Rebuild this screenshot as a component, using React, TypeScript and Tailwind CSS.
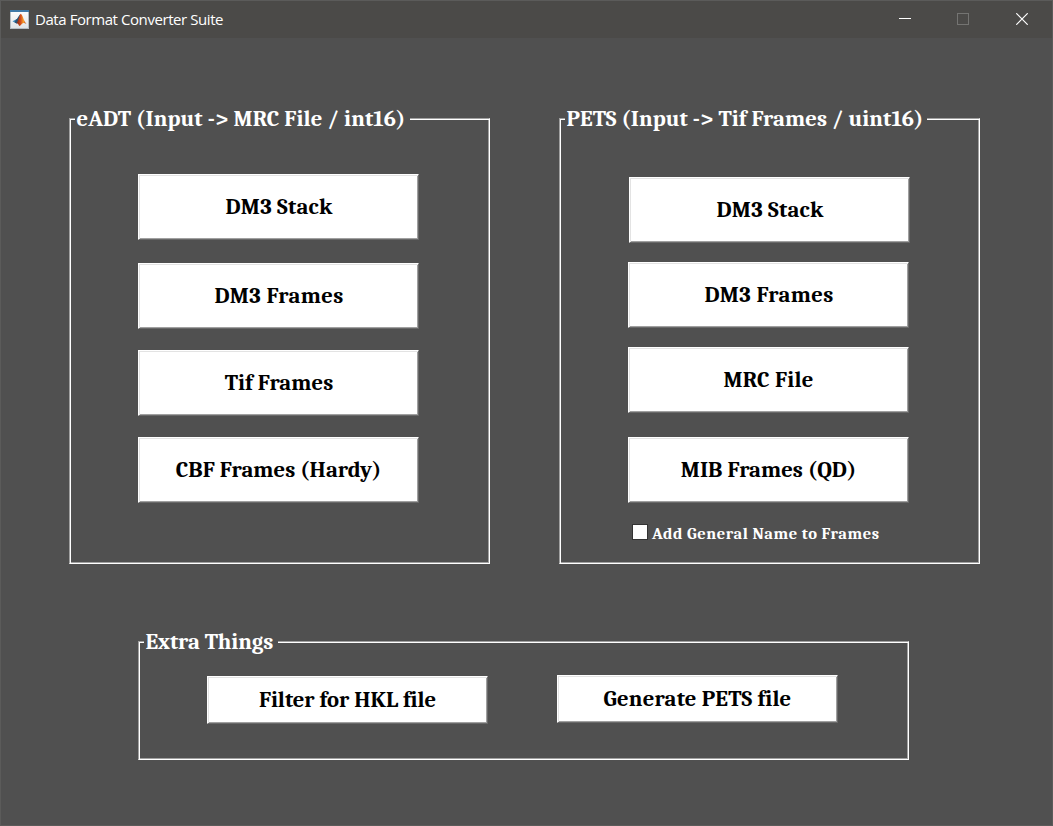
import type { ReactNode } from "react";

function MatlabIcon() {
  return (
    <svg width="19" height="19" viewBox="0 0 19 19" className="shrink-0">
      <defs>
        <linearGradient id="paper" x1="0" y1="0" x2="0" y2="1">
          <stop offset="0" stopColor="#ffffff" />
          <stop offset="1" stopColor="#dfe3e6" />
        </linearGradient>
        <linearGradient id="flame" x1="0" y1="0" x2="1" y2="0">
          <stop offset="0" stopColor="#7a1f12" />
          <stop offset="0.45" stopColor="#d9541e" />
          <stop offset="0.7" stopColor="#f6a02c" />
          <stop offset="1" stopColor="#b5301a" />
        </linearGradient>
      </defs>
      <rect x="0.5" y="0.5" width="18" height="18" fill="url(#paper)" stroke="#b4bcc2" />
      <rect x="0" y="0" width="19" height="2" fill="#3f79a8" />
      <path d="M2.5 11.3 L6 9.6 C7.6 9.2 8.4 6.4 10.2 4.2 L9.4 9.5 L6.6 13.4 Z" fill="#3f86b8" />
      <path d="M6 9.6 C7.6 9.2 8.4 6.4 10.2 4.2 L8.6 10 L6.6 13.4 L4.6 12.4 Z" fill="#285577" />
      <path d="M6.4 13.2 C8 12 8.6 7 10.6 3.8 C12.6 4.4 13.4 10.6 16.4 14 C14.4 12.6 13 12.6 11.8 14 C10.8 15.2 10 16 9.2 16 C8.6 14.4 8 13.4 6.4 13.2 Z" fill="url(#flame)" />
    </svg>
  );
}

function TitleBar() {
  return (
    <header className="flex h-[37px] shrink-0 items-center bg-[#4b4a48] pl-[9px]">
      <MatlabIcon />
      <h1 className="mb-[2px] ml-[6px] font-['Open_Sans','Noto_Sans',sans-serif] text-[15px] leading-5 tracking-[-0.43px] text-white">
        Data Format Converter Suite
      </h1>
      <div className="ml-auto flex h-full items-center pb-px pr-px">
        <button aria-label="Minimize" className="flex h-full w-[58px] items-center justify-center">
          <svg width="12" height="12" viewBox="0 0 12 12">
            <path d="M0 5.5H12" stroke="#ffffff" />
          </svg>
        </button>
        <button aria-label="Maximize" disabled className="flex h-full w-[58px] items-center justify-center">
          <svg width="12" height="12" viewBox="0 0 12 12">
            <rect x="0.5" y="0.5" width="11" height="11" fill="none" stroke="#747472" />
          </svg>
        </button>
        <button aria-label="Close" className="flex h-full w-[59px] items-center justify-center">
          <svg width="12" height="12" viewBox="0 0 12 12">
            <path d="M0.3 0.3L11.7 11.7M11.7 0.3L0.3 11.7" stroke="#ffffff" strokeWidth="1.2" />
          </svg>
        </button>
      </div>
    </header>
  );
}

function Group({ title, titleClass, className, children }: { title: string; titleClass: string; className: string; children: ReactNode }) {
  return (
    <section
      className={`flex flex-col border border-b-white border-l-[#a0a0a0] border-r-white border-t-[#a0a0a0] shadow-[inset_1px_1px_#ffffff,inset_-1px_-1px_#a0a0a0] ${className}`}
    >
      <h2 className={`-mt-[14px] ml-[5px] h-[28px] shrink-0 self-start whitespace-nowrap bg-[#505050] pl-[1.5px] text-[22.67px] font-bold leading-[28px] text-white ${titleClass}`}>
        {title}
      </h2>
      {children}
    </section>
  );
}

function PushButton({ label, className }: { label: string; className: string }) {
  return (
    <button
      className={`flex w-[281px] shrink-0 items-center justify-center whitespace-nowrap border border-b-[#696969] border-l-white border-r-[#696969] border-t-white bg-white text-[22.67px] font-bold leading-[28px] text-black shadow-[inset_1px_1px_#e3e3e3,inset_-1px_-1px_#a0a0a0] ${className}`}
    >
      {label}
    </button>
  );
}

export default function App() {
  return (
    <div className="flex h-[826px] w-[1053px] flex-col border border-[#5b5b5a] bg-[#505050] font-[Cambria,Caladea,'Liberation_Serif',serif]">
      <TitleBar />
      <main className="flex flex-col">
        <div className="flex pl-[68px] pt-[80px]">
          <Group title="eADT (Input -> MRC File / int16)" titleClass="w-[335px] tracking-[0.08px]" className="h-[446px] w-[421px]">
            <div className="flex flex-col pl-[68px] pt-[41px]">
              <PushButton label="DM3 Stack" className="h-[66px] pl-px tracking-[0.2px]" />
              <PushButton label="DM3 Frames" className="mt-[23px] h-[66px] pl-px tracking-[0.3px]" />
              <PushButton label="Tif Frames" className="mt-[21px] h-[66px] pl-px tracking-[0.05px]" />
              <PushButton label="CBF Frames (Hardy)" className="mt-[21px] h-[66px] tracking-[0.03px]" />
            </div>
          </Group>
          <Group title="PETS (Input -> Tif Frames / uint16)" titleClass="w-[362px] tracking-[0.04px]" className="ml-[69px] h-[446px] w-[421px]">
            <div className="flex flex-col pl-[68px] pt-[44px]">
              <PushButton label="DM3 Stack" className="ml-px h-[66px] pl-px tracking-[0.2px]" />
              <PushButton label="DM3 Frames" className="mt-[19px] h-[66px] pl-px tracking-[0.3px]" />
              <PushButton label="MRC File" className="mt-[19px] h-[66px] tracking-[0.22px]" />
              <PushButton label="MIB Frames (QD)" className="mt-[24px] h-[66px] tracking-[0.02px]" />
              <label className="ml-[4px] mt-[19px] flex h-[22px] items-start">
                <input type="checkbox" className="mt-[2px] size-4 appearance-none border border-[#333333] bg-white" />
                <span className="ml-[4px] mt-px whitespace-nowrap text-[16.5px] font-bold leading-[22px] tracking-[0.52px] text-white">
                  Add General Name to Frames
                </span>
              </label>
            </div>
          </Group>
        </div>
        <div className="flex pl-[137px] pt-[77px]">
          <Group title="Extra Things" titleClass="w-[134px] tracking-[-0.08px]" className="h-[119px] w-[771px]">
            <div className="flex items-start pl-[68px] pt-[19px]">
              <PushButton label="Filter for HKL file" className="mt-px h-[48px] tracking-[-0.04px]" />
              <PushButton label="Generate PETS file" className="ml-[69px] h-[48px] tracking-[0.18px]" />
            </div>
          </Group>
        </div>
      </main>
    </div>
  );
}
